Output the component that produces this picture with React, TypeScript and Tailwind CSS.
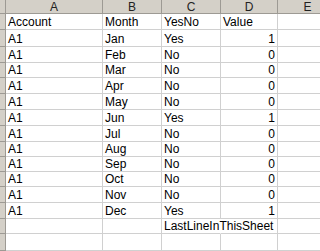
import React from "react";

const COLS = ["A", "B", "C", "D", "E"];
const ROW_H = [16, 17, 16, 15, 16, 16, 16, 16, 15, 15, 15, 16, 16, 15, 17, 16];

const MONTHS = ["Jan", "Feb", "Mar", "Apr", "May", "Jun", "Jul", "Aug", "Sep", "Oct", "Nov", "Dec"];
const YES = ["Jan", "Jun", "Dec"];

type Row = { a: string; b: string; c: string; d: string };

const rows: Row[] = [
  { a: "Account", b: "Month", c: "YesNo", d: "Value" },
  ...MONTHS.map((m) => ({ a: "A1", b: m, c: YES.includes(m) ? "Yes" : "No", d: YES.includes(m) ? "1" : "0" })),
  { a: "", b: "", c: "LastLineInThisSheet", d: "" },
  { a: "", b: "", c: "", d: "" },
  { a: "", b: "", c: "", d: "" },
];

export default function App() {
  return (
    <div className="w-[320px] h-[251px] overflow-hidden bg-white text-black text-[12px] leading-none font-['Liberation_Sans',Arial,sans-serif]">
      {/* column headers */}
      <div className="grid grid-cols-[6px_97px_59px_59px_57px_60px] h-[14px] bg-[#d4d0c8] border-b border-[#9d9a94]">
        <div className="border-r border-[#9d9a94]" />
        {COLS.map((c) => (
          <div key={c} className="border-r border-[#9d9a94] flex items-center justify-center text-[12px] text-[#222]">
            {c}
          </div>
        ))}
      </div>

      {rows.map((r, i) => {
        // long text spills into D, so the C/D gridline is hidden there
        const spills = r.c.length > 10;
        return (
          <div
            key={i}
            className="grid grid-cols-[6px_97px_59px_59px_57px_60px]"
            style={{ height: ROW_H[i] }}
          >
            <div className="bg-[#d4d0c8] border-r border-b border-[#9d9a94]" />
            <div className="border-r border-b border-[#d0d0d0] flex items-end pl-[2px] pb-[1px] whitespace-nowrap">{r.a}</div>
            <div className="border-r border-b border-[#d0d0d0] flex items-end pl-[2px] pb-[1px] whitespace-nowrap">{r.b}</div>
            <div
              className={`border-b border-[#d0d0d0] flex items-end pl-[2px] pb-[1px] whitespace-nowrap relative z-10 ${
                spills ? "border-r border-r-transparent" : "border-r"
              }`}
            >
              {r.c}
            </div>
            <div
              className={`border-r border-b border-[#d0d0d0] flex items-end pb-[1px] whitespace-nowrap ${
                i === 0 ? "pl-[2px]" : "justify-end pr-[2px]"
              }`}
            >
              {r.d}
            </div>
            <div className="border-b border-[#d0d0d0]" />
          </div>
        );
      })}
    </div>
  );
}
